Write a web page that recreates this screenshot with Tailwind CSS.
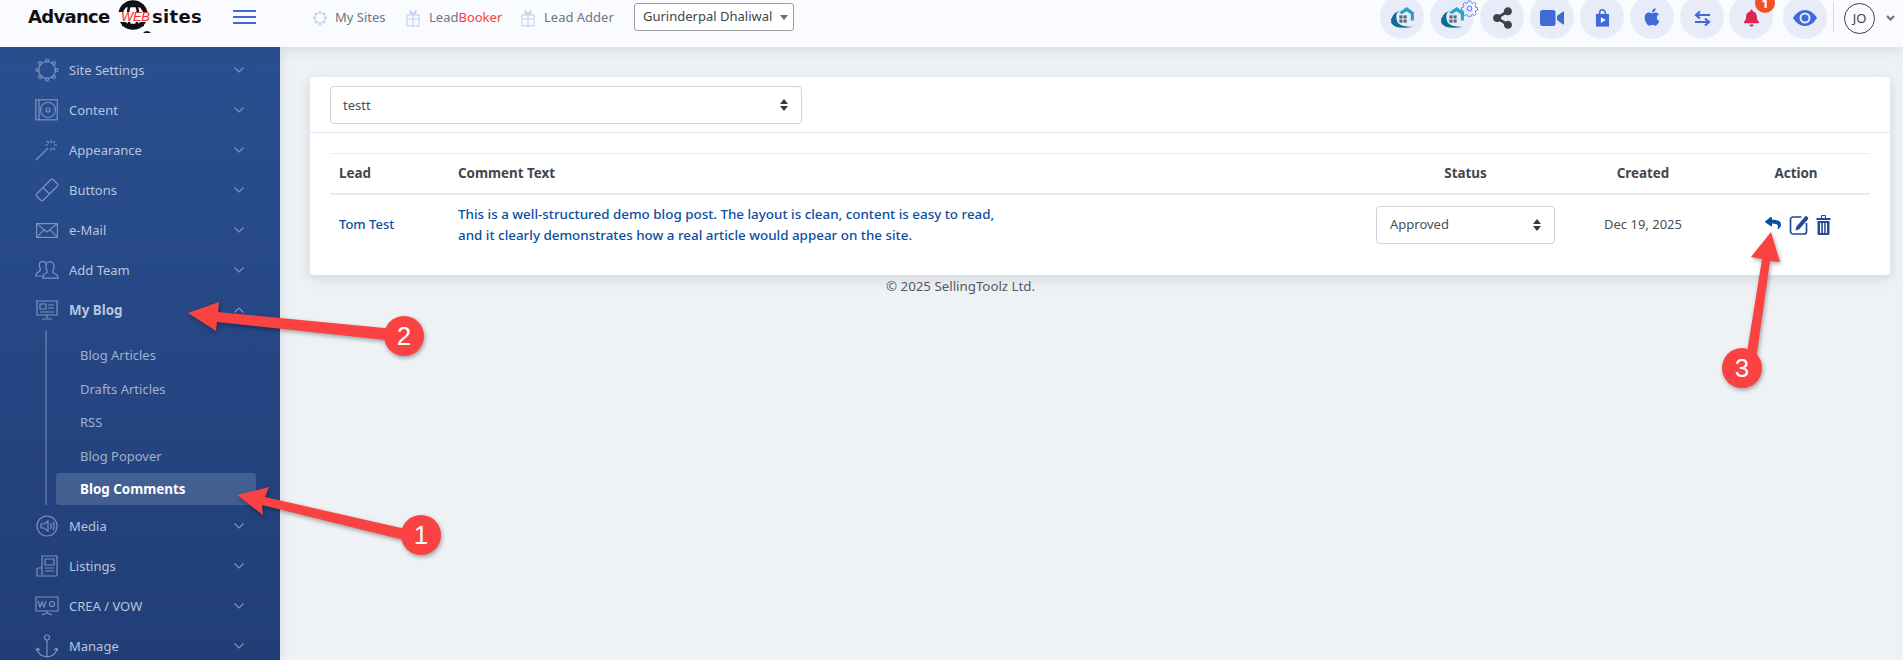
<!DOCTYPE html>
<html lang="en">
<head>
<meta charset="utf-8">
<title>Blog Comments</title>
<script src="https://cdn.jsdelivr.net/npm/@tailwindcss/browser@4"></script>
</head>
<body class="m-0 bg-[#eff2f5] font-['Noto_Sans',sans-serif] text-[13px] text-[#495057]">
<div class="relative w-[1903px] h-[660px] overflow-hidden flex flex-col">

  <!-- Header -->
  <header class="relative z-20 h-[47px] shrink-0 bg-[#fafbff] flex items-start shadow-[0_2px_12px_rgba(60,70,90,0.14)]">
    <div class="relative w-[233px] h-[47px] shrink-0">
      <span class="absolute left-[28px] top-[4px] font-['DejaVu_Sans',sans-serif] font-bold text-[18px] leading-[26px] tracking-[-0.7px] text-[#111]">Advance</span>
      <svg class="absolute left-[117px] top-0" width="34" height="36" viewBox="0 0 34 36"><circle cx="16" cy="15" r="12.500" fill="none" stroke="#111" stroke-width="4.500"/><ellipse cx="16" cy="15" rx="5" ry="13" fill="none" stroke="#111" stroke-width="2.500"/><path d="M5 6h22M5 25h22" stroke="#111" stroke-width="2.500"/><rect x="0" y="12" width="34" height="10" fill="#fafbff"/><path d="M26 33q4-4 8 0z" fill="#111"/></svg>
      <span class="absolute left-[121px] top-[7px] font-['Liberation_Sans',sans-serif] italic text-[13px] leading-[20px] tracking-[-0.3px] text-[#f5282d]">WEB</span>
      <span class="absolute left-[152px] top-[4px] font-['DejaVu_Sans',sans-serif] font-bold text-[18px] leading-[26px] tracking-[0.3px] text-[#111]">sites</span>
    </div>
    <div class="mt-[10px] w-[23px] flex flex-col gap-[4px] shrink-0">
      <span class="h-[2px] bg-[#3f6ad8]"></span><span class="h-[2px] bg-[#3f6ad8]"></span><span class="h-[2px] bg-[#3f6ad8]"></span>
    </div>
    <nav class="ml-[57px] mt-[9px] flex items-center h-[18px] text-[#70767c]">
      <a class="flex items-center gap-2 w-[93px]">
        <svg width="14" height="18" viewBox="0 0 18 22" fill="none" stroke="#c3d0ee" stroke-width="1.4"><circle cx="9" cy="11" r="6.5"/><circle cx="9" cy="3" r="1"/><circle cx="9" cy="19" r="1"/><circle cx="1.5" cy="11" r="1"/><circle cx="16.500" cy="11" r="1"/><circle cx="3.500" cy="5.500" r="1"/><circle cx="14.500" cy="5.500" r="1"/><circle cx="3.500" cy="16.500" r="1"/><circle cx="14.500" cy="16.500" r="1"/></svg>
        <span>My Sites</span>
      </a>
      <a class="flex items-center gap-[9px] w-[115px]">
        <svg width="14" height="18" viewBox="0 0 14 18" fill="none" stroke="#c3d0ee" stroke-width="1.100"><rect x="1" y="6" width="12" height="11"/><path d="M1 10h12M7 4v13M7 5Q3 0 4 3t3 2Q11 0 10 3T7 5"/></svg>
        <span>Lead<span class="text-[#f2413f]">Booker</span></span>
      </a>
      <a class="flex items-center gap-[9px] w-[113px]">
        <svg width="14" height="18" viewBox="0 0 14 18" fill="none" stroke="#c3d0ee" stroke-width="1.100"><rect x="1" y="6" width="12" height="11"/><path d="M1 10h12M7 4v13M7 5Q3 0 4 3t3 2Q11 0 10 3T7 5"/></svg>
        <span>Lead Adder</span>
      </a>
    </nav>
    <div class="mt-[3px] w-[160px] h-[28px] border border-[#9a9ea3] rounded-[3px] bg-white flex items-center justify-between pl-2 pr-[5px] text-[#3f454b]">
      <span>Gurinderpal Dhaliwal</span>
      <svg width="8" height="5" viewBox="0 0 8 5"><path d="M0 0h8L4 5z" fill="#6b7075"/></svg>
    </div>

    <div class="ml-auto -mt-[5px] flex items-start mr-[8px]">
      <div class="flex gap-[6px]">
        <a class="w-11 h-11 rounded-full bg-[#e8ecf8] flex items-center justify-center pt-[2px]">
          <svg width="27" height="25" viewBox="0 0 26 24"><path d="M11 4Q1 8 2 16q3 5 12 5 6 0 9-1-8 0-12-2T7 10q0-4 4-6z" fill="#0f6c9a"/><path d="M10 6l7-5 7 5v8h-3V8l-4-3-5 3z" fill="#27a4c9"/><rect x="10" y="9" width="3" height="3" fill="#5b6570"/><rect x="14" y="9" width="3" height="3" fill="#5b6570"/><rect x="10" y="13" width="3" height="3" fill="#5b6570"/><rect x="14" y="13" width="3" height="3" fill="#5b6570"/></svg>
        </a>
        <a class="relative w-11 h-11 rounded-full bg-[#e8ecf8] flex items-center justify-center pt-[2px]">
          <svg width="27" height="25" viewBox="0 0 26 24"><path d="M11 4Q1 8 2 16q3 5 12 5 6 0 9-1-8 0-12-2T7 10q0-4 4-6z" fill="#0f6c9a"/><path d="M10 6l7-5 7 5v8h-3V8l-4-3-5 3z" fill="#27a4c9"/><rect x="10" y="9" width="3" height="3" fill="#5b6570"/><rect x="14" y="9" width="3" height="3" fill="#5b6570"/><rect x="10" y="13" width="3" height="3" fill="#5b6570"/><rect x="14" y="13" width="3" height="3" fill="#5b6570"/></svg>
          <svg class="absolute left-[31px] top-[5px]" width="17" height="17" viewBox="0 0 18 18" fill="none" stroke="#4a72dd" stroke-width="1"><circle cx="9" cy="9" r="2.500"/><path d="M7.500 1h3l.5 2.200 1.800.8 2-1.200 2 2-1.200 2 .8 1.800 2 .4v3l-2 .5-.8 1.800 1.200 2-2 2-2-1.200-1.800.8-.5 2h-3l-.5-2-1.800-.8-2 1.200-2-2 1.200-2-.8-1.800-2-.5v-3l2-.4.8-1.800-1.200-2 2-2 2 1.200 1.800-.8z" transform="scale(.9) translate(1 0)"/></svg>
        </a>
        <a class="w-11 h-11 rounded-full bg-[#e8ecf8] flex items-center justify-center pt-[2px]">
          <svg width="19" height="22" viewBox="0 0 448 512" fill="#3f4347"><path d="M352 320c-22.608 0-43.387 7.819-59.79 20.895l-102.486-64.054a96.551 96.551 0 0 0 0-41.683l102.486-64.054C308.613 184.181 329.392 192 352 192c53.019 0 96-42.981 96-96S405.019 0 352 0s-96 42.981-96 96c0 7.158.79 14.13 2.276 20.841L155.79 180.895C139.387 167.819 118.608 160 96 160c-53.019 0-96 42.981-96 96s42.981 96 96 96c22.608 0 43.387-7.819 59.79-20.895l102.486 64.054A96.301 96.301 0 0 0 256 416c0 53.019 42.981 96 96 96s96-42.981 96-96-42.981-96-96-96z"/></svg>
        </a>
        <a class="w-11 h-11 rounded-full bg-[#e8ecf8] flex items-center justify-center pt-[2px]">
          <svg width="24" height="16" viewBox="0 0 24 16" fill="#3f6ad8"><rect width="15.500" height="16" rx="2.500"/><path d="M17 6l6-4.500q1-.3 1 .8v11.400q0 1.100-1 .8L17 10z"/></svg>
        </a>
        <a class="w-11 h-11 rounded-full bg-[#e8ecf8] flex items-center justify-center pt-[2px]">
          <svg width="17" height="18" viewBox="0 0 18 22"><path d="M5.500 6V4.500a3.500 3.500 0 0 1 7 0V6" fill="none" stroke="#3f6ad8" stroke-width="1.800"/><path d="M1 6h16v15.500H1z" fill="#3f6ad8"/><path d="M7 10l6 3.500L7 17z" fill="#fff"/></svg>
        </a>
        <a class="w-11 h-11 rounded-full bg-[#e8ecf8] flex items-center justify-center">
          <svg width="16" height="20" viewBox="0 0 384 512" fill="#3f6ad8"><path d="M318.7 268.7c-.2-36.7 16.4-64.4 50-84.8-18.8-26.9-47.2-41.7-84.7-44.6-35.5-2.8-74.3 20.7-88.5 20.7-15 0-49.4-19.7-76.4-19.7C63.3 141.2 4 184.8 4 273.5q0 39.3 14.4 81.2c12.8 36.7 59 126.7 107.2 125.2 25.2-.6 43-17.9 75.8-17.9 31.8 0 48.3 17.9 76.4 17.9 48.6-.7 90.4-82.5 102.6-119.3-65.2-30.7-61.7-90-61.7-91.9zm-56.6-164.2c27.3-32.4 24.8-61.9 24-72.5-24.1 1.4-52 16.4-67.9 34.9-17.5 19.8-27.8 44.3-25.6 71.9 26.1 2 49.9-11.4 69.5-34.3z"/></svg>
        </a>
        <a class="w-11 h-11 rounded-full bg-[#e8ecf8] flex items-center justify-center pt-[2px]">
          <svg width="17" height="17" viewBox="0 0 17 17" fill="none" stroke="#3f6ad8" stroke-width="2.200"><path d="M3 5h13M6 1.500L2 5l4 3.500M1 12h13M11 8.500l4 3.500-4 3.500"/></svg>
        </a>
        <a class="relative ml-[-1px] w-11 h-11 rounded-full bg-[#e8ecf8] flex items-center justify-center pt-[2px]">
          <svg width="15" height="18" viewBox="0 0 448 512" fill="#d92550"><path d="M224 512c35.32 0 63.97-28.65 63.97-64H160.03c0 35.35 28.65 64 63.97 64zm215.39-149.71c-19.32-20.76-55.47-51.99-55.47-154.29 0-77.7-54.48-139.9-127.94-155.16V32c0-17.67-14.32-32-31.98-32s-31.98 14.33-31.98 32v20.84C118.56 68.1 64.08 130.3 64.08 208c0 102.3-36.15 133.53-55.47 154.29-6 6.45-8.66 14.16-8.61 21.71.11 16.4 12.98 32 32.1 32h383.8c19.12 0 32-15.6 32.1-32 .05-7.55-2.61-15.27-8.61-21.71z"/></svg>
          <span class="absolute left-[26px] -top-[2px] w-5 h-5 rounded-full bg-[#f0512b] text-white font-bold text-[13px] leading-[18px] flex items-center justify-center">1</span>
        </a>
        <a class="ml-[4px] w-11 h-11 rounded-full bg-[#e8ecf8] flex items-center justify-center pt-[2px]">
          <svg width="24" height="16" viewBox="0 0 24 16"><path d="M0 8Q5 0 12 0t12 8q-5 8-12 8T0 8z" fill="#3f6ad8"/><circle cx="12" cy="8" r="5.500" fill="#e8ecf8"/><circle cx="12" cy="8" r="3.500" fill="#3f6ad8"/></svg>
        </a>
      </div>
      <div class="ml-[6px] mt-[7px] w-px h-[30px] bg-[#d5d8de]"></div>
      <div class="ml-[10px] mt-[8px] w-[31px] h-[31px] rounded-full border border-[#3f4347] flex items-center justify-center text-[#3f4347] text-[13px]">JO</div>
      <svg class="ml-[11px] mt-[20px]" width="9" height="6" viewBox="0 0 9 6" fill="none" stroke="#6b7075" stroke-width="2"><path d="M1 1l3.500 3.500L8 1"/></svg>
    </div>
  </header>

  <div class="flex flex-1 min-h-0">
    <!-- Sidebar -->
    <aside class="relative z-10 w-[280px] shrink-0 bg-linear-to-b from-[#2a4f90] to-[#213e77] overflow-hidden pt-[3px] pl-[35px] pr-[36px] text-[#b7c5df] shadow-[0_0_12px_rgba(30,50,90,0.12)]">
      <a class="flex items-center h-10">
        <svg class="w-[24px] mr-[10px]" width="24" height="24" viewBox="0 0 24 24" fill="none" stroke="#7d92bd" stroke-width="1.200"><circle cx="12" cy="12" r="8.500"/><circle cx="12" cy="2.500" r="1.500"/><circle cx="12" cy="21.500" r="1.500"/><circle cx="2.500" cy="12" r="1.500"/><circle cx="21.500" cy="12" r="1.500"/><circle cx="5" cy="5" r="1.500"/><circle cx="19" cy="5" r="1.500"/><circle cx="5" cy="19" r="1.500"/><circle cx="19" cy="19" r="1.500"/></svg>
        <span class="flex-1 pt-[2px]">Site Settings</span>
        <svg width="10" height="6" viewBox="0 0 10 6" fill="none" stroke="#7d92bd" stroke-width="1.200"><path d="M.5.500L5 5 9.500.500"/></svg>
      </a>
      <a class="flex items-center h-10">
        <svg class="w-[24px] mr-[10px]" width="24" height="22" viewBox="0 0 24 22" fill="none" stroke="#7d92bd" stroke-width="1.200"><rect x=".8" y=".8" width="21.500" height="20"/><path d="M4 .8v20"/><circle cx="13" cy="11" r="7.500"/><circle cx="13" cy="11" r="2"/></svg>
        <span class="flex-1 pt-[2px]">Content</span>
        <svg width="10" height="6" viewBox="0 0 10 6" fill="none" stroke="#7d92bd" stroke-width="1.200"><path d="M.5.500L5 5 9.500.500"/></svg>
      </a>
      <a class="flex items-center h-10">
        <svg class="w-[24px] mr-[10px]" width="24" height="22" viewBox="0 0 24 22" fill="none" stroke="#7d92bd" stroke-width="1.200"><path d="M1 21L13 9M16 1v3M16 9v3M10 6h3M19 6h3M12 2l2 2M20 2l-2 2M20 11l-2-2"/></svg>
        <span class="flex-1 pt-[2px]">Appearance</span>
        <svg width="10" height="6" viewBox="0 0 10 6" fill="none" stroke="#7d92bd" stroke-width="1.200"><path d="M.5.500L5 5 9.500.500"/></svg>
      </a>
      <a class="flex items-center h-10">
        <svg class="w-[24px] mr-[10px]" width="24" height="24" viewBox="0 0 24 24" fill="none" stroke="#7d92bd" stroke-width="1.200"><path d="M1.500 16L16 1.500q1-.7 2 0l4.500 4.500q.7 1 0 2L8 22.500q-1 .7-2 0L1.500 18q-.7-1 0-2zM8 9.500l6.500 6.500M5 15v.1M8 18v.1M8 15v.1M18 6v.1M15 8v.1M18 9v.1"/></svg>
        <span class="flex-1 pt-[2px]">Buttons</span>
        <svg width="10" height="6" viewBox="0 0 10 6" fill="none" stroke="#7d92bd" stroke-width="1.200"><path d="M.5.500L5 5 9.500.500"/></svg>
      </a>
      <a class="flex items-center h-10">
        <svg class="w-[24px] mr-[10px]" width="22" height="15" viewBox="0 0 22 15" fill="none" stroke="#7d92bd" stroke-width="1.200"><rect x=".6" y=".6" width="20.800" height="13.800"/><path d="M.6.600L11 9 21.400.600M.6 14.400l7.500-7.800M21.400 14.400l-7.500-7.800"/></svg>
        <span class="flex-1 pt-[2px]">e-Mail</span>
        <svg width="10" height="6" viewBox="0 0 10 6" fill="none" stroke="#7d92bd" stroke-width="1.200"><path d="M.5.500L5 5 9.500.500"/></svg>
      </a>
      <a class="flex items-center h-10">
        <svg class="w-[24px] mr-[10px]" width="24" height="18" viewBox="0 0 24 18" fill="none" stroke="#7d92bd" stroke-width="1.200"><path d="M9 15H.8q0-3 2.500-4t2-3q-1-2-1-4a3.500 3.500 0 0 1 7 0"/><path d="M8 17.200h15q0-3.500-3-4.500t-2-3q1-2 1-5a4 4 0 0 0-8 0q0 3 1 5t-2 3q-2 1-2 4.500z"/></svg>
        <span class="flex-1 pt-[2px]">Add Team</span>
        <svg width="10" height="6" viewBox="0 0 10 6" fill="none" stroke="#7d92bd" stroke-width="1.200"><path d="M.5.500L5 5 9.500.500"/></svg>
      </a>
      <a class="flex items-center h-10">
        <svg class="w-[24px] mr-[10px]" width="24" height="20" viewBox="0 0 24 20" fill="none" stroke="#7d92bd" stroke-width="1.200"><path d="M.5 1h23M2 1v14h20V1M12 15v3M7 19h10M5 4h6v5H5zM13 5h6M13 8h6M5 12h14"/></svg>
        <span class="flex-1 font-bold text-[13.400px]">My Blog</span>
        <svg width="10" height="6" viewBox="0 0 10 6" fill="none" stroke="#7d92bd" stroke-width="1.200"><path d="M.5 5.500L5 1l4.500 4.500"/></svg>
      </a>
      <div class="ml-[10px] border-l-2 border-white/20 pt-[9px] pl-[9px] flex flex-col gap-[1.5px] w-[211px] text-[#9fb0d0]">
        <a class="h-8 flex items-center pl-6 pt-[2px]">Blog Articles</a>
        <a class="h-8 flex items-center pl-6 pt-[2px]">Drafts Articles</a>
        <a class="h-8 flex items-center pl-6 pt-[2px]">RSS</a>
        <a class="h-8 flex items-center pl-6 pt-[2px]">Blog Popover</a>
        <a class="h-8 flex items-center pl-6 rounded-[3px] bg-white/15 text-white font-bold text-[13.400px]">Blog Comments</a>
      </div>
      <a class="flex items-center h-10 mt-px">
        <svg class="w-[24px] mr-[10px]" width="22" height="22" viewBox="0 0 22 22" fill="none" stroke="#7d92bd" stroke-width="1.200"><circle cx="11" cy="11" r="10"/><path d="M5 9h3l4-3v10l-4-3H5zM14.500 8q2 3 0 6M17 7q2.500 4 0 8"/></svg>
        <span class="flex-1 pt-[2px]">Media</span>
        <svg width="10" height="6" viewBox="0 0 10 6" fill="none" stroke="#7d92bd" stroke-width="1.200"><path d="M.5.500L5 5 9.500.500"/></svg>
      </a>
      <a class="flex items-center h-10">
        <svg class="w-[24px] mr-[10px]" width="22" height="22" viewBox="0 0 22 22" fill="none" stroke="#7d92bd" stroke-width="1.200"><path d="M6 13V1h15v19q0 1-1 1H2q-1 0-1-1v-6q0-1 1-1h4v7M9 4h9v6H9zM9 13h9M9 16h9"/></svg>
        <span class="flex-1 pt-[2px]">Listings</span>
        <svg width="10" height="6" viewBox="0 0 10 6" fill="none" stroke="#7d92bd" stroke-width="1.200"><path d="M.5.500L5 5 9.500.500"/></svg>
      </a>
      <a class="flex items-center h-10">
        <svg class="w-[24px] mr-[10px]" width="24" height="20" viewBox="0 0 24 20" fill="none" stroke="#7d92bd" stroke-width="1.200"><path d="M1 1h22v14H1zM12 15v2M7 19l5-2 5 2M3 5l2 6 2-5 2 5 2-6"/><circle cx="17" cy="8" r="2.500"/></svg>
        <span class="flex-1 pt-[2px]">CREA / VOW</span>
        <svg width="10" height="6" viewBox="0 0 10 6" fill="none" stroke="#7d92bd" stroke-width="1.200"><path d="M.5.500L5 5 9.500.500"/></svg>
      </a>
      <a class="flex items-center h-10">
        <svg class="w-[24px] mr-[10px]" width="22" height="24" viewBox="0 0 22 24" fill="none" stroke="#7d92bd" stroke-width="1.200"><circle cx="11" cy="3.500" r="2.500"/><path d="M11 6v17M1 14q1 8 10 9 9-1 10-9M1 14l-.5 3M1 14l3 2M21 14l.5 3M21 14l-3 2"/></svg>
        <span class="flex-1 pt-[2px]">Manage</span>
        <svg width="10" height="6" viewBox="0 0 10 6" fill="none" stroke="#7d92bd" stroke-width="1.200"><path d="M.5.500L5 5 9.500.500"/></svg>
      </a>
    </aside>

    <!-- Main -->
    <main class="flex-1 min-w-0 pt-[30px] pl-[30px] pr-[13px] flex flex-col">
      <section class="h-[198px] shrink-0 bg-white rounded-[4px] shadow-[0_4px_14px_rgba(60,70,100,0.16)]">
        <div class="h-[56px] pt-[9px] pl-5 border-b border-[#e4e8ee]">
          <div class="w-[472px] h-[38px] border border-[#ced4da] rounded-[4px] flex items-center justify-between pl-3 pr-[13px] text-[#495057]">
            <span class="pt-[2px]">testt</span>
            <svg width="8" height="12" viewBox="0 0 8 12" fill="#343a40"><path d="M4 0l4 5H0zM4 12L0 7h8z"/></svg>
          </div>
        </div>
        <div class="px-5 pt-[20px]">
          <table class="w-[1540px] table-fixed border-collapse">
            <colgroup>
              <col class="w-[119px]"><col class="w-[918px]"><col class="w-[197px]"><col class="w-[158px]"><col class="w-[148px]">
            </colgroup>
            <thead>
              <tr class="h-[40px] border-t border-[#e9ecef] border-b-2 text-[#42474d] text-[13.400px]">
                <th class="px-[9px] text-left font-bold">Lead</th>
                <th class="px-[9px] text-left font-bold">Comment Text</th>
                <th class="px-[9px] text-center font-bold">Status</th>
                <th class="px-[9px] text-center font-bold">Created</th>
                <th class="px-[9px] text-center font-bold">Action</th>
              </tr>
            </thead>
            <tbody>
              <tr class="h-[62px]">
                <td class="px-[9px] text-[#0a4ea2] font-medium">Tom Test</td>
                <td class="px-[9px] text-[#0a4ea2] font-medium text-[13.400px] leading-[21px]">This is a well-structured demo blog post. The layout is clean, content is easy to read,<br>and it clearly demonstrates how a real article would appear on the site.</td>
                <td class="px-[9px]">
                  <div class="w-[179px] h-[38px] border border-[#ced4da] rounded-[4px] flex items-center justify-between pl-[13px] pr-[13px] text-[#495057]">
                    <span>Approved</span>
                    <svg width="8" height="12" viewBox="0 0 8 12" fill="#343a40"><path d="M4 0l4 5H0zM4 12L0 7h8z"/></svg>
                  </div>
                </td>
                <td class="px-[9px] text-center text-[#495057]">Dec 19, 2025</td>
                <td class="px-[9px]">
                  <div class="flex items-start pl-[34px] h-5">
                    <svg class="mt-px" width="16" height="14" viewBox="0 0 512 512" preserveAspectRatio="none" fill="#0a4ea2"><path d="M8.309 189.836L184.313 37.851C199.719 24.546 224 35.347 224 56.015v80.053c160.629 1.839 288 34.032 288 186.258 0 61.441-39.581 122.309-83.333 154.132-13.653 9.931-33.111-2.533-28.077-18.631 45.344-145.012-21.507-183.51-176.59-185.742V360c0 20.7-24.3 31.453-39.687 18.164l-176.004-152c-11.071-9.562-11.086-26.753 0-36.328z"/></svg>
                    <svg class="ml-[8px]" width="20" height="20" viewBox="0 0 19 20"><path d="M12 2.500H3.500A2.500 2.500 0 0 0 1 5v12a2.500 2.500 0 0 0 2.500 2.500h11A2.500 2.500 0 0 0 17 17V8.500" fill="none" stroke="#244a94" stroke-width="1.700" transform="translate(0 -.5)"/><path d="M7 11.500L15.500 1.500q1-.8 2 0l1 1q.6 1-.2 2L9.500 14.500l-3.500 1z" fill="#244a94"/></svg>
                    <svg class="ml-[7px]" width="15" height="20" viewBox="0 0 14 20" fill="#244a94"><path d="M0 3h4.500V1q0-1 1-1h3q1 0 1 1v2H14v2H0zM5.500 1v2h3V1z"/><path d="M1 6h12v12.500q0 1.500-1.500 1.500h-9Q1 20 1 18.500zM3.500 8v10h1.300V8zM6.400 8v10h1.300V8zM9.200 8v10h1.300V8z" fill-rule="evenodd"/></svg>
                  </div>
                </td>
              </tr>
            </tbody>
          </table>
        </div>
      </section>
      <p class="mt-[2px] pl-[576px] text-[13.300px] text-[#55595e] leading-[18px]">© 2025 SellingToolz Ltd.</p>
    </main>
  </div>

  <!-- Annotation arrows -->
  <svg class="absolute inset-0 z-30 pointer-events-none" width="1903" height="660" viewBox="0 0 1903 660">
    <g fill="#fb4243" style="filter:drop-shadow(1px 2px 2px rgba(0,0,0,.35))">
      <path d="M237 495L269 487 265 497 410 530 408 541 262 505 263 515z"/>
      <circle cx="421" cy="535" r="20"/>
      <path d="M188 313L219 302 218 312 405 330 404 342 217 322 216 331z"/>
      <circle cx="404" cy="336" r="20"/>
      <path d="M1771 232L1751 257 1762 259 1745 365 1755 367 1770 261 1780 262z"/>
      <circle cx="1742" cy="368" r="20"/>
    </g>
    <g fill="#fff" font-family="Liberation Sans, sans-serif" font-size="26" text-anchor="middle">
      <text x="421" y="544">1</text>
      <text x="404" y="345">2</text>
      <text x="1742" y="377">3</text>
    </g>
  </svg>
</div>
</body>
</html>
